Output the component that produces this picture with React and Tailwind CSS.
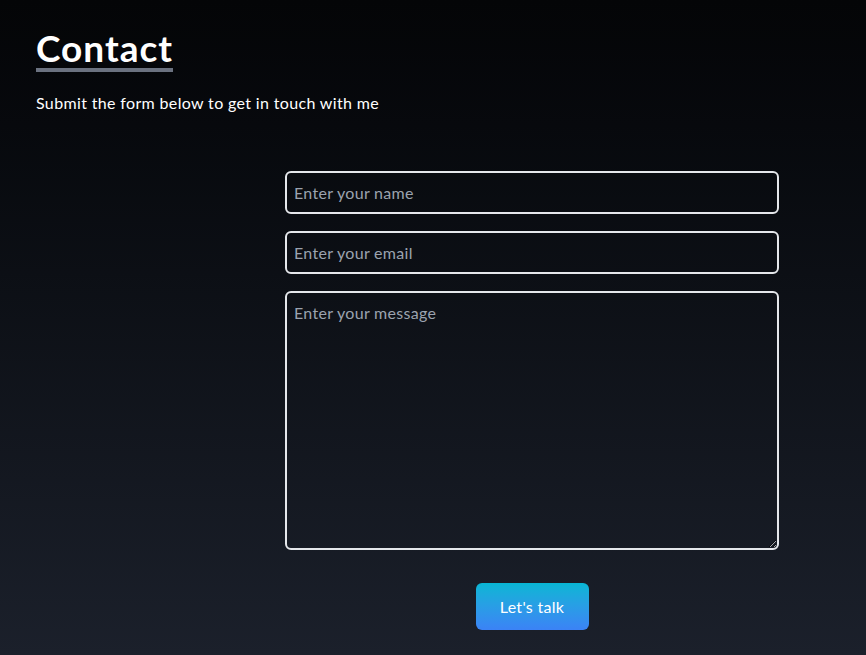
import React from 'react';

const fieldCls =
  'w-full bg-transparent border-2 border-[#e5e7eb] rounded-md px-[7px] text-base tracking-[0.3px] text-white placeholder:text-[#9ba3af] outline-none';

const App = () => {
  return (
    <div
      className="min-h-screen w-full bg-gradient-to-b from-[#040507] to-[#1b202b] text-white px-9 pt-[28px] pb-6"
      style={{ fontFamily: 'Lato, "Open Sans", sans-serif' }}
    >
      <h1 className="inline-block text-[37px] leading-[40px] font-bold tracking-[1px] border-b-4 border-[#6b7280]">Contact</h1>
      <p className="mt-[19px] text-base leading-6 tracking-[0.35px]">Submit the form below to get in touch with me</p>

      <form className="ml-[249px] mt-[56px] w-[494px] flex flex-col gap-[17px]" onSubmit={(e) => e.preventDefault()}>
        <input className={`${fieldCls} h-[43px]`} placeholder="Enter your name" />
        <input className={`${fieldCls} h-[43px]`} placeholder="Enter your email" />
        <textarea className={`${fieldCls} h-[259px] pt-[8px]`} placeholder="Enter your message" />
        <button
          type="submit"
          className="self-center mt-[16px] w-[113px] h-[47px] rounded-md bg-gradient-to-b from-[#06b6d4] to-[#3b82f6] text-white text-base tracking-[0.3px]"
        >
          Let's talk
        </button>
      </form>
    </div>
  );
};

export default App;
